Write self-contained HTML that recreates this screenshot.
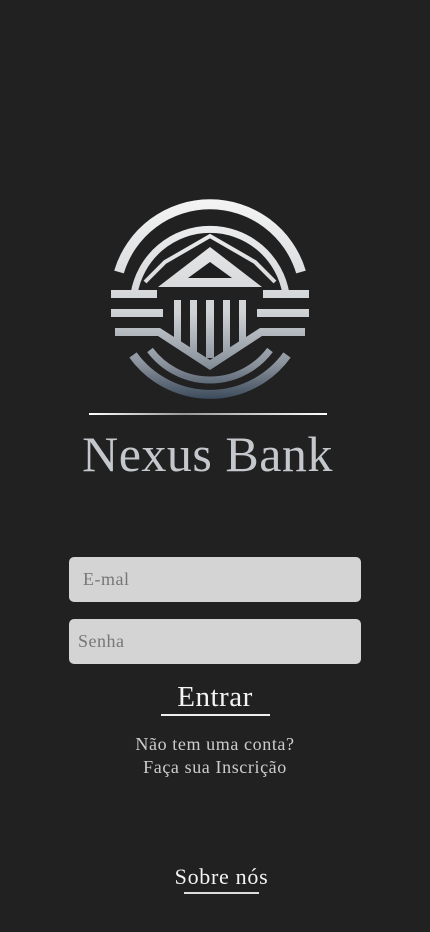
<!DOCTYPE html>
<html><head><meta charset="utf-8"><style>
html,body{margin:0;padding:0;background:#212121;width:430px;height:932px;overflow:hidden;font-family:"Liberation Serif",serif;}
.abs{position:absolute;}
.inp{position:absolute;left:69px;width:292px;height:45px;background:#d4d4d4;border-radius:5px;color:#777;font-size:18px;line-height:45px;box-sizing:border-box;letter-spacing:0.5px}
</style></head><body>
<svg class="abs" style="left:100px;top:195px" width="220" height="220" viewBox="100 195 220 220">
<defs>
<linearGradient id="g" gradientUnits="userSpaceOnUse" x1="0" y1="200" x2="0" y2="405"><stop offset="0" stop-color="#f4f4f4"/><stop offset="0.55" stop-color="#cfd2d5"/><stop offset="0.8" stop-color="#8a929c"/><stop offset="1" stop-color="#2e3e50"/></linearGradient>
</defs>
<g fill="none" stroke="url(#g)" stroke-linecap="butt">
<path d="M119 272 A95 95 0 0 1 301 272" stroke-width="10"/>
<path d="M134 294 A77 77 0 0 1 286 294" stroke-width="7"/>
<path d="M145 282 L165 262 L210 236 L255 262 L275 282" stroke-width="4"/>
<path d="M133 355 A95 95 0 0 0 287 355" stroke-width="9"/>
<path d="M150 350 A75 75 0 0 0 270 350" stroke-width="7"/>
</g>
<g fill="url(#g)">
<path d="M210 247 L262 287 L158 287 Z"/>
<path d="M210 262 L232 278 L188 278 Z" fill="#1e1e1e"/>
<rect x="111" y="290" width="46" height="8"/><rect x="263" y="290" width="46" height="8"/>
<rect x="111" y="309" width="52" height="8"/><rect x="257" y="309" width="52" height="8"/>
<path d="M115 328 L160 328 L210 360 L260 328 L305 328 L305 336 L262 336 L210 370 L158 336 L115 336Z"/>
<rect x="174" y="300" width="7" height="42"/><rect x="190" y="300" width="7" height="52"/>
<rect x="206" y="300" width="8" height="58"/><rect x="223" y="300" width="7" height="52"/>
<rect x="239" y="300" width="7" height="42"/>
</g>
</svg>
<div class="abs" style="left:89px;top:413px;width:238px;height:2px;background:linear-gradient(90deg,#fff,#999 40%,#fff)"></div>
<div class="abs" style="left:0;width:415px;top:424px;text-align:center;font-size:50px;color:#c4c8cc;line-height:60px;letter-spacing:0.5px">Nexus Bank</div>
<div class="inp" style="top:557px;padding-left:14px">E-mal</div>
<div class="inp" style="top:619px;padding-left:9px">Senha</div>
<div class="abs" style="left:0;width:430px;top:679px;text-align:center;font-size:29px;color:#f4f4f4;line-height:36px;letter-spacing:0.5px">Entrar</div>
<div class="abs" style="left:161px;top:714px;width:109px;height:2px;background:#eee"></div>
<div class="abs" style="left:0;width:430px;top:733px;text-align:center;font-size:18px;color:#ccc;line-height:23px;letter-spacing:0.6px">Não tem uma conta?<br>Faça sua Inscrição</div>
<div class="abs" style="left:0;width:443px;top:864px;text-align:center;font-size:22px;color:#f4f4f4;line-height:26px;letter-spacing:0.7px">Sobre nós</div>
<div class="abs" style="left:184px;top:892px;width:75px;height:2px;background:#ddd"></div>
</body></html>
